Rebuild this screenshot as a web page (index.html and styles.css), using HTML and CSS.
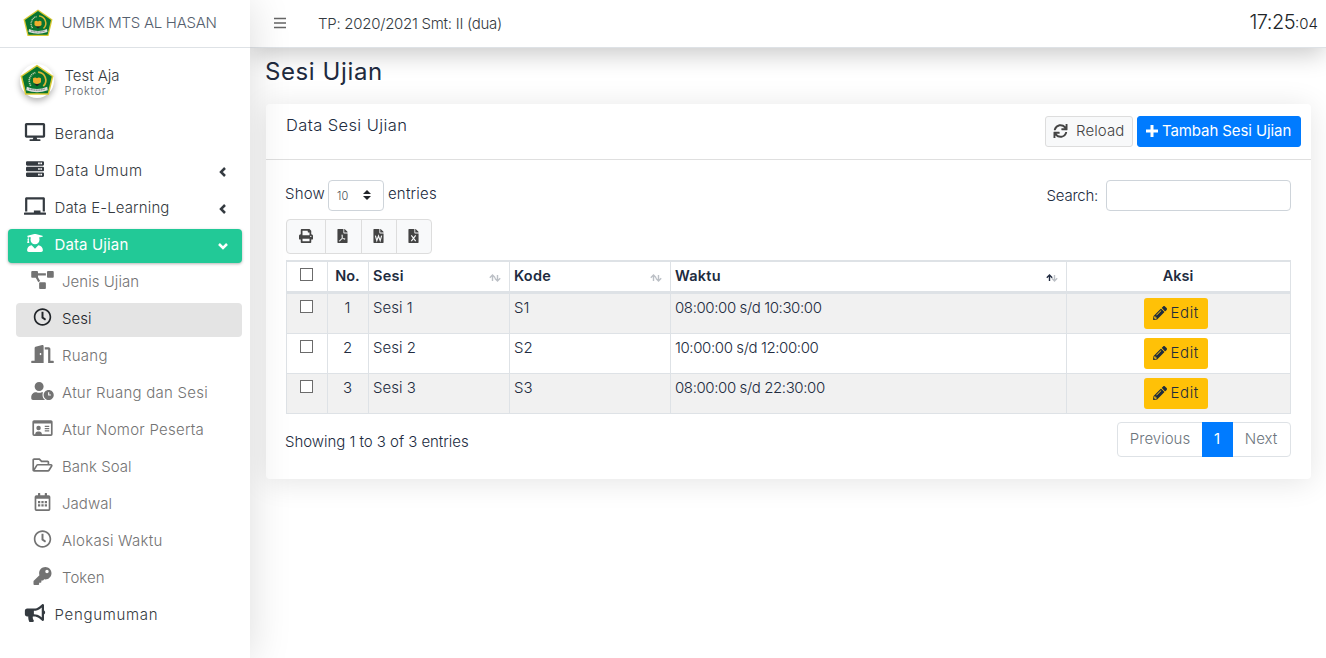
FILE: index.html
```html
<!DOCTYPE html>
<html lang="id">
<head>
<meta charset="utf-8">
<title>Sesi Ujian</title>
<link rel="stylesheet" href="styles.css">
</head>
<body>
<svg class="defs" aria-hidden="true">
  <symbol id="logo" viewBox="0 0 60 56">
    <path d="M30 1 59 21 51 54H9L1 21z" fill="#d9c934"/>
    <path d="M30 4 56 22 49 51.500H11L4 22z" fill="#08742f"/>
    <path d="M19 38a15 15 0 0 1 8-23" fill="none" stroke="#c3cfae" stroke-width="3" stroke-dasharray="2 1.300"/>
    <path d="M32 14a14.500 14.500 0 0 1 9 25" fill="none" stroke="#d8b637" stroke-width="3"/>
    <path d="M23 25q4-3 7 0 3-3 7 0v7q-3 3-7 3t-7-3z" fill="#efae2d"/>
    <path d="M25 35h10l-5 4z" fill="#222"/>
    <path d="M12 40q18 8 36 0l1 6q-19 7-38 0z" fill="#d9dedb"/>
    <path d="M16 44q14 4 28 0" fill="none" stroke="#55605a" stroke-width="1.500" stroke-dasharray="2 1"/>
  </symbol>
  <symbol id="clock" viewBox="0 0 512 512"><path d="M256 8C119 8 8 119 8 256s111 248 248 248 248-111 248-248S393 8 256 8zm0 448c-110.500 0-200-89.500-200-200S145.500 56 256 56s200 89.500 200 200-89.500 200-200 200zm61.800-104.400l-84.900-61.700c-3.100-2.300-4.900-5.900-4.900-9.700V116c0-6.600 5.400-12 12-12h32c6.600 0 12 5.400 12 12v141.700l66.800 48.600c5.400 3.900 6.500 11.400 2.600 16.800L334.600 349c-3.900 5.300-11.400 6.500-16.800 2.600z"/></symbol>
  <symbol id="file" viewBox="0 0 384 512"><path d="M224 136V0H24C10.700 0 0 10.700 0 24v464c0 13.300 10.700 24 24 24h336c13.300 0 24-10.700 24-24V160H248c-13.200 0-24-10.800-24-24zM384 121.900c0-6.300-2.500-12.400-7-16.900L279.100 7c-4.500-4.500-10.600-7-17-7H256v128h128z"/></symbol>
  <symbol id="pencil" viewBox="0 0 512 512"><path d="M497.900 142.100l-46.100 46.100c-4.700 4.700-12.300 4.700-17 0l-111-111c-4.700-4.700-4.700-12.300 0-17l46.100-46.100c18.700-18.700 49.100-18.700 67.900 0l60.100 60.100c18.800 18.700 18.800 49.100 0 67.900zM284.200 99.800L21.600 362.400.4 483.900c-2.900 16.400 11.400 30.600 27.800 27.800l121.500-21.300 262.600-262.600c4.700-4.700 4.700-12.300 0-17l-111-111c-4.800-4.700-12.400-4.700-17.100 0zM124.100 339.900c-5.500-5.500-5.500-14.300 0-19.800l154-154c5.500-5.500 14.300-5.500 19.800 0s5.500 14.300 0 19.800l-154 154c-5.500 5.500-14.300 5.500-19.800 0zM88 424h48v36.300l-64.500 11.300-31.100-31.100L51.700 376H88v48z"/></symbol>
  <symbol id="sort" viewBox="0 0 12 8"><path class="sort-up" d="M3.500 7V1M.8 3.700 3.500 1 6.200 3.700"/><path class="sort-down" d="M8.500 1V7M5.800 4.300 8.500 7 11.200 4.300"/></symbol>
</svg>

<div class="app">
  <aside class="sidebar">
    <a class="brand"><svg class="brand-logo"><use href="#logo"/></svg><span>UMBK MTS AL HASAN</span></a>
    <div class="user">
      <span class="avatar"><svg><use href="#logo"/></svg></span>
      <div><div class="user-name">Test Aja</div><div class="user-role">Proktor</div></div>
    </div>
    <nav class="menu">
      <a class="item"><svg class="icon" viewBox="0 0 576 512"><path d="M528 0H48C21.500 0 0 21.500 0 48v320c0 26.500 21.500 48 48 48h192l-16 48h-72c-13.300 0-24 10.700-24 24s10.700 24 24 24h272c13.300 0 24-10.700 24-24s-10.700-24-24-24h-72l-16-48h192c26.500 0 48-21.500 48-48V48c0-26.500-21.500-48-48-48zm-16 352H64V64h448v288z"/></svg><span class="wide-s">Beranda</span></a>
      <a class="item"><svg class="icon" viewBox="0 0 512 512"><path fill-rule="evenodd" d="M32 32h448q32 0 32 32v64q0 32-32 32H32q-32 0-32-32V64q0-32 32-32zm312 40v48h48V72zm64 0v48h48V72zM32 192h448q32 0 32 32v64q0 32-32 32H32q-32 0-32-32v-64q0-32 32-32zm312 40v48h48v-48zm64 0v48h48v-48zM32 352h448q32 0 32 32v64q0 32-32 32H32q-32 0-32-32v-64q0-32 32-32zm312 40v48h48v-48zm64 0v48h48v-48z"/></svg><span class="wide-l">Data Umum</span><svg class="caret" viewBox="0 0 10 10"><path d="M7 1 3 5l4 4"/></svg></a>
      <a class="item"><svg class="icon" viewBox="0 0 640 512"><path d="M96 64h448v352h64V40c0-22.060-17.940-40-40-40H72C49.940 0 32 17.940 32 40v376h64V64zm528 384H480v-64H288v64H16c-8.840 0-16 7.160-16 16v32c0 8.840 7.160 16 16 16h608c8.840 0 16-7.160 16-16v-32c0-8.840-7.160-16-16-16z"/></svg><span class="wide-xs">Data E-Learning</span><svg class="caret" viewBox="0 0 10 10"><path d="M7 1 3 5l4 4"/></svg></a>
      <a class="item active"><svg class="icon" viewBox="0 0 448 512"><path d="M319.400 320.600L224 416l-95.400-95.400C57.100 323.700 0 382.200 0 454.400v9.600c0 26.500 21.500 48 48 48h352c26.500 0 48-21.500 48-48v-9.600c0-72.200-57.100-130.700-128.600-133.800zM13.600 79.800l6.400 1.500v58.400c-7 4.200-12 11.500-12 20.300 0 8.400 4.600 15.400 11.100 19.700L3.500 242c-1.700 6.900 2.100 14 7.600 14h41.800c5.500 0 9.300-7.100 7.600-14l-15.600-62.300C51.400 175.400 56 168.400 56 160c0-8.800-5-16.100-12-20.300V87.100l66 15.900c-8.600 17.200-14 36.400-14 57 0 70.700 57.300 128 128 128s128-57.300 128-128c0-20.600-5.300-39.800-14-57l96.300-23.200c18.200-4.400 18.200-27.100 0-31.500l-190.400-46c-13-3.100-26.700-3.100-39.700 0L13.600 48.200c-18.100 4.400-18.100 27.200 0 31.600z"/></svg><span class="wide-xs">Data Ujian</span><svg class="caret" viewBox="0 0 10 10"><path d="M1 3l4 4 4-4"/></svg></a>
      <a class="item sub"><svg class="icon" viewBox="0 0 640 512"><path d="M384 320H256c-17.670 0-32 14.330-32 32v128c0 17.670 14.330 32 32 32h128c17.670 0 32-14.330 32-32V352c0-17.670-14.330-32-32-32zM192 32c0-17.670-14.330-32-32-32H32C14.330 0 0 14.330 0 32v128c0 17.670 14.330 32 32 32h95.720l73.160 128.040C211.980 300.980 232.400 288 256 288h.28L192 175.510V128h224V64H192V32zM608 0H480c-17.670 0-32 14.330-32 32v128c0 17.670 14.330 32 32 32h128c17.670 0 32-14.330 32-32V32c0-17.670-14.330-32-32-32z"/></svg><span>Jenis Ujian</span></a>
      <a class="item sub current"><svg class="icon"><use href="#clock"/></svg><span>Sesi</span></a>
      <a class="item sub"><svg class="icon" viewBox="0 0 640 512"><path d="M624 448h-80V113.450C544 86.190 522.470 64 496 64H384v64h96v384h144c8.840 0 16-7.160 16-16v-32c0-8.840-7.160-16-16-16zM312.240 1.010l-192 49.740C105.990 54.440 96 67.700 96 82.920V448H16c-8.840 0-16 7.160-16 16v32c0 8.840 7.160 16 16 16h336V33.180c0-21.580-19.560-37.410-39.760-32.170zM264 288c-13.250 0-24-14.330-24-32s10.750-32 24-32 24 14.330 24 32-10.750 32-24 32z"/></svg><span class="wide-s">Ruang</span></a>
      <a class="item sub"><svg class="icon" viewBox="0 0 640 512"><path d="M496 224c-79.600 0-144 64.400-144 144s64.400 144 144 144 144-64.400 144-144-64.400-144-144-144zm64 150.300c0 5.300-4.400 9.700-9.700 9.700h-60.600c-5.300 0-9.700-4.400-9.700-9.700v-76.600c0-5.300 4.400-9.700 9.700-9.700h12.600c5.300 0 9.700 4.400 9.700 9.700V352h38.300c5.300 0 9.700 4.400 9.700 9.700v12.600zM320 368c0-27.800 6.700-54.100 18.200-77.500-8-1.500-16.200-2.500-24.600-2.500h-16.700c-22.200 10.200-46.900 16-72.900 16s-50.600-5.800-72.900-16h-16.700C60.200 288 0 348.200 0 422.400V464c0 26.500 21.500 48 48 48h347.100c-45.300-31.900-75.100-84.500-75.100-144zm-96-112c70.700 0 128-57.300 128-128S294.700 0 224 0 96 57.300 96 128s57.300 128 128 128z"/></svg><span class="wide-s">Atur Ruang dan Sesi</span></a>
      <a class="item sub"><svg class="icon" viewBox="0 0 576 512"><path fill-rule="evenodd" d="M48 32h480q48 0 48 48v352q0 48-48 48H48q-48 0-48-48V80q0-48 48-48zm0 96v304h32c0-50 30-80 76-80h40c46 0 76 30 76 80h256V128zm128 64a64 64 0 1 1 0 128 64 64 0 0 1 0-128zm176 0h128v32H352zm0 64h128v32H352zm0 64h128v32H352z"/></svg><span class="wide-s">Atur Nomor Peserta</span></a>
      <a class="item sub"><svg class="icon" viewBox="0 0 576 512"><path d="M527.900 224H480v-48c0-26.500-21.500-48-48-48H272l-64-64H48C21.500 64 0 85.500 0 112v288c0 26.500 21.500 48 48 48h400c16.500 0 31.900-8.500 40.700-22.600l79.900-128c20-31.900-3-73.400-40.700-73.400zM48 118c0-3.300 2.700-6 6-6h134.100l64 64H426c3.300 0 6 2.700 6 6v42H152c-16.800 0-32.400 8.800-41.100 23.200L48 351.400zm400 282H72l77.200-128H528z"/></svg><span>Bank Soal</span></a>
      <a class="item sub"><svg class="icon" viewBox="0 0 448 512"><path fill-rule="evenodd" d="M96 64V12q0-12 12-12h40q12 0 12 12v52h128V12q0-12 12-12h40q12 0 12 12v52h48q48 0 48 48v352q0 48-48 48H48q-48 0-48-48V112q0-48 48-48zM48 160v304h352V160zm48 64h64v64H96zm96 0h64v64h-64zm96 0h64v64h-64zM96 320h64v64H96zm96 0h64v64h-64zm96 0h64v64h-64z"/></svg><span>Jadwal</span></a>
      <a class="item sub"><svg class="icon"><use href="#clock"/></svg><span class="wide-s">Alokasi Waktu</span></a>
      <a class="item sub"><svg class="icon" viewBox="0 0 512 512"><path d="M512 176.001C512 273.203 433.202 352 336 352c-11.220 0-22.190-1.062-32.827-3.069l-24.012 27.014A23.999 23.999 0 0 1 261.223 384H224v40c0 13.255-10.745 24-24 24h-40v40c0 13.255-10.745 24-24 24H24c-13.255 0-24-10.745-24-24v-78.059c0-6.365 2.529-12.470 7.029-16.971l161.802-161.802C163.108 213.814 160 195.271 160 176 160 78.798 238.797.001 335.999 0 433.488-.001 512 78.511 512 176.001zM336 128c0 26.510 21.490 48 48 48s48-21.490 48-48-21.490-48-48-48-48 21.490-48 48z"/></svg><span>Token</span></a>
      <a class="item"><svg class="icon" viewBox="0 0 576 512"><path d="M576 240c0-23.630-12.950-44.040-32-55.120V32.010C544 23.260 537.020 0 512 0c-7.120 0-14.190 2.380-19.980 7.020l-85.030 68.030C364.280 109.190 310.660 128 256 128H64c-35.350 0-64 28.650-64 64v96c0 35.350 28.650 64 64 64h33.700c-1.390 10.480-2.180 21.140-2.180 32 0 39.770 9.260 77.350 25.560 110.940 5.190 10.690 16.520 17.060 28.400 17.060h74.280c26.050 0 41.690-29.840 25.900-50.560-16.400-21.520-26.150-48.360-26.150-77.440 0-11.110 1.620-21.790 4.410-32H256c54.660 0 108.280 18.810 150.980 52.950l85.030 68.030a32.023 32.023 0 0 0 19.980 7.020c24.920 0 32-22.780 32-32V295.130C563.050 284.040 576 263.630 576 240zm-96 141.420l-33.050-26.440C392.950 311.780 325.120 288 256 288v-96c69.120 0 136.950-23.780 190.950-66.980L480 98.580v282.840z"/></svg><span class="wide-l">Pengumuman</span></a>
    </nav>
  </aside>

  <div class="page">
    <header class="topbar">
      <svg class="burger" viewBox="0 0 12 12"><path d="M0 1.500h12M0 6h12M0 10.500h12"/></svg>
      <span class="period">TP: 2020/2021 Smt: II (dua)</span>
      <span class="clock"><span class="clock-main">17:25</span><span class="clock-sec">:04</span></span>
    </header>
    <main class="content">
      <h1>Sesi Ujian</h1>
      <section class="card">
        <div class="card-head">
          <h2>Data Sesi Ujian</h2>
          <div class="actions">
            <button class="btn btn-light"><svg viewBox="0 0 512 512"><path d="M440.650 12.570l4 82.770A247.160 247.160 0 0 0 255.830 8C134.730 8 33.910 94.920 12.290 209.820A12 12 0 0 0 24.090 224h49.050a12 12 0 0 0 11.670-9.260 175.910 175.910 0 0 1 317-56.940l-101.460-4.860a12 12 0 0 0-12.570 12v47.410a12 12 0 0 0 12 12H500a12 12 0 0 0 12-12V12a12 12 0 0 0-12-12h-47.370a12 12 0 0 0-11.980 12.570zM255.830 432a175.610 175.610 0 0 1-146-77.800l101.800 4.870a12 12 0 0 0 12.570-12v-47.400a12 12 0 0 0-12-12H12a12 12 0 0 0-12 12V500a12 12 0 0 0 12 12h47.350a12 12 0 0 0 12-12.600l-4.150-82.570A247.170 247.170 0 0 0 255.830 504c121.110 0 221.930-86.920 243.550-201.820a12 12 0 0 0-11.800-14.180h-49.050a12 12 0 0 0-11.670 9.260A175.860 175.860 0 0 1 255.830 432z"/></svg><span>Reload</span></button>
            <button class="btn btn-primary"><svg viewBox="0 0 14 14"><path d="M5.500 1h3v4.500H13v3H8.500V13h-3V8.500H1v-3h4.500z"/></svg><span>Tambah Sesi Ujian</span></button>
          </div>
        </div>
        <div class="card-body">
          <div class="controls">
            <label class="length"><span>Show</span><span class="select"><span>10</span><svg viewBox="0 0 8 10"><path d="M0 4 4 0l4 4zM0 6h8l-4 4z"/></svg></span><span>entries</span></label>
            <label class="search"><span>Search:</span><input type="text"></label>
          </div>
          <div class="exports">
            <button class="export print"><svg viewBox="0 0 512 512"><path d="M448 192V77.250c0-8.490-3.370-16.620-9.370-22.630L393.370 9.370c-6-6-14.140-9.370-22.630-9.370H96C78.330 0 64 14.330 64 32v160c-35.350 0-64 28.650-64 64v112c0 8.840 7.160 16 16 16h48v96c0 17.670 14.330 32 32 32h320c17.670 0 32-14.330 32-32v-96h48c8.840 0 16-7.160 16-16V256c0-35.350-28.650-64-64-64zm-64 256H128v-96h256v96zm0-224H128V64h192v48c0 8.840 7.160 16 16 16h48v96zm48 72c-13.250 0-24-10.750-24-24 0-13.260 10.750-24 24-24s24 10.740 24 24c0 13.250-10.750 24-24 24z"/></svg></button>
            <button class="export"><svg viewBox="0 0 384 512"><use href="#file"/><path class="mark thin" d="M178 210c-10 0-12 40 0 76s40 88 80 92c40 2 50-22 10-28-50-8-110 10-150 36s-50 58-30 60c26 0 80-90 98-150 8-40 6-86-8-86z"/></svg></button>
            <button class="export"><svg viewBox="0 0 384 512"><use href="#file"/><path class="mark" d="M78 240l52 184 62-170 62 170 52-184"/></svg></button>
            <button class="export"><svg viewBox="0 0 384 512"><use href="#file"/><path class="mark" d="M112 236l160 208M272 236 112 444"/></svg></button>
          </div>
          <table>
            <colgroup><col class="c-check"><col class="c-no"><col class="c-sesi"><col class="c-kode"><col class="c-waktu"><col class="c-aksi"></colgroup>
            <thead><tr>
              <th class="mid"><input type="checkbox"></th><th class="mid">No.</th>
              <th><div class="th">Sesi<svg><use href="#sort"/></svg></div></th>
              <th><div class="th">Kode<svg><use href="#sort"/></svg></div></th>
              <th><div class="th asc">Waktu<svg><use href="#sort"/></svg></div></th>
              <th class="mid">Aksi</th>
            </tr></thead>
            <tbody>
              <tr><td class="mid"><input type="checkbox"></td><td class="mid">1</td><td>Sesi 1</td><td>S1</td><td class="time">08:00:00 s/d 10:30:00</td><td class="mid"><button class="edit"><svg><use href="#pencil"/></svg>Edit</button></td></tr>
              <tr><td class="mid"><input type="checkbox"></td><td class="mid">2</td><td>Sesi 2</td><td>S2</td><td class="time">10:00:00 s/d 12:00:00</td><td class="mid"><button class="edit"><svg><use href="#pencil"/></svg>Edit</button></td></tr>
              <tr><td class="mid"><input type="checkbox"></td><td class="mid">3</td><td>Sesi 3</td><td>S3</td><td class="time">08:00:00 s/d 22:30:00</td><td class="mid"><button class="edit"><svg><use href="#pencil"/></svg>Edit</button></td></tr>
            </tbody>
          </table>
          <div class="footer">
            <span class="info">Showing 1 to 3 of 3 entries</span>
            <div class="pager"><a class="prev">Previous</a><a class="on">1</a><a class="next">Next</a></div>
          </div>
        </div>
      </section>
    </main>
  </div>
</div>
</body>
</html>
```
FILE: styles.css
```css
* { box-sizing: border-box; }
body { margin: 0; background: #fff; color: #212b40; font: 270 15px/22px Inter, "Open Sans", sans-serif; overflow: hidden; }
button, input { font: inherit; color: inherit; margin: 0; }
svg { fill: currentColor; display: block; flex: none; }
.defs { position: absolute; width: 0; height: 0; }
.app { display: flex; height: 658px; }

.sidebar { width: 250px; flex: none; background: #fff; color: #343a40; position: relative; z-index: 2; box-shadow: 0 3px 40px rgba(0, 0, 0, .14); }
.brand { display: flex; align-items: center; height: 48px; border-bottom: 1px solid #dee2e6; padding: 0 0 1px 23px; gap: 8.500px; color: #55606e; }
.brand-logo { width: 30px; height: 28px; }
.brand span { letter-spacing: -.28px; padding-bottom: 1px; }
.user { display: flex; height: 70px; padding: 16px 0 0 20px; gap: 10.500px; }
.avatar { width: 34px; height: 34px; border-radius: 50%; box-shadow: 0 3px 6px rgba(0, 0, 0, .3); }
.avatar svg { width: 34px; height: 32px; }
.user-name { line-height: 20px; padding-top: 2px; letter-spacing: -.05px; }
.user-role { font-size: 11px; line-height: 11px; letter-spacing: .75px; color: #5d6369; }
.menu { display: flex; flex-direction: column; gap: 3px; padding: 0 8px; }
.item { display: flex; align-items: center; height: 34px; padding: 0 14px 0 15.500px; border-radius: 4px; }
.item .icon { width: 22px; height: 18px; margin: 0 9px 6px 0; }
.item span { padding-bottom: 3px; letter-spacing: .05px; }
.item .wide-xs { letter-spacing: .13px; }
.item .wide-s { letter-spacing: .25px; }
.item .wide-l { letter-spacing: .7px; }
.item.sub { margin-left: 8px; color: #737373; padding-left: 15px; }
.item.sub .icon { width: 23px; margin-right: 8px; }
.item.active { background: #22c997; color: #fff; font-weight: 400; box-shadow: 0 1px 3px rgba(0, 0, 0, .3); }
.item.current { background: #e4e4e4; color: #212529; }
.caret { width: 10px; height: 10px; margin-left: auto; fill: none; stroke: currentColor; stroke-width: 2.5; }

.page { flex: 1; min-width: 0; }
.topbar { height: 48px; display: flex; align-items: center; padding: 0 8px 1px 24px; border-bottom: 1px solid #dee2e6; background: #fff; position: relative; z-index: 1; color: #343a40; box-shadow: 0 8px 24px -2px rgba(0, 0, 0, .22); }
.burger { width: 12px; height: 12px; stroke: #666; stroke-width: 1.5; margin-right: 32px; }
.period { letter-spacing: -.27px; padding-top: 2px; }
.clock { margin-left: auto; display: flex; align-items: baseline; color: #212529; }
.clock-main { font-size: 20px; letter-spacing: -.5px; }
.clock-sec { font-size: 15px; }
.content { padding: 8px 15px 0 16px; }
h1 { margin: 0 0 0 -1px; font-size: 24px; line-height: 32px; font-weight: 400; letter-spacing: .6px; }
.card { margin-top: 16px; height: 375px; border-radius: 4px; background: #fff; box-shadow: 0 3px 30px rgba(0, 0, 0, .11); }
.card-head { height: 56px; border-bottom: 1px solid #dfdfdf; display: flex; justify-content: space-between; padding: 12px 10px 0 20px; }
h2 { margin: -2px 0 0; font-size: 16.500px; line-height: 22px; font-weight: 270; letter-spacing: .4px; }
.actions { display: flex; gap: 4px; }
.btn { height: 31px; display: flex; align-items: center; border: 1px solid #ddd; border-radius: 3px; padding: 0 8px 2px; white-space: nowrap; }
.btn-light { width: 88px; background: #f8f9fa; color: #444; gap: 8px; padding-left: 7px; letter-spacing: .1px; }
.btn-light svg { width: 15px; height: 14px; }
.btn-primary { width: 164px; background: #007bff; border-color: #007bff; color: #fff; font-weight: 400; gap: 3px; padding: 0 7px 2px; letter-spacing: -.1px; }
.btn-primary svg { width: 14px; height: 14px; }
.card-body { padding: 20px 20px 0; }
.controls { display: flex; justify-content: space-between; height: 31px; margin-left: -1px; }
.length, .search { display: flex; align-items: center; }
.length > span { padding-bottom: 3px; letter-spacing: .2px; }
.length .select { display: flex; align-items: center; width: 56px; height: 31px; border: 1px solid #ced4da; border-radius: 4px; margin: 0 4px 0 3px; padding: 0 12px 0 8px; justify-content: space-between; font-size: 11px; color: #495057; }
.select svg { width: 8px; height: 10px; color: #212529; margin-top: -1px; }
.search span { letter-spacing: -.25px; }
.search input { width: 185px; height: 31px; border: 1px solid #ced4da; border-radius: 4px; margin-left: 8px; }
.exports { display: flex; height: 35px; width: 146px; margin-top: 8px; border: 1px solid #ddd; border-radius: 4px; background: #f8f9fa; color: #444; }
.export { flex: 0 0 35.500px; height: 33px; border: 0; border-left: 1px solid #ddd; background: none; padding: 0 1px 1px 0; display: grid; place-items: center; }
.export.print { flex-basis: 38px; border-left: 0; }
.export svg { width: 11px; height: 14px; }
.export.print svg { width: 14px; }
.mark { fill: none; stroke: #f8f9fa; stroke-width: 42; }
.mark.thin { stroke-width: 27; }

table { width: 1005px; margin-top: 6px; table-layout: fixed; border-spacing: 0; }
.c-check, .c-no { width: 41px; }
.c-sesi { width: 141px; }
.c-kode { width: 161px; }
.c-waktu { width: 396px; }
.c-aksi { width: 225px; }
th, td { border-left: 1px solid #dee2e6; padding: 4px 4px 0; vertical-align: top; text-align: left; }
th:last-child, td:last-child { border-right: 1px solid #dee2e6; }
th { height: 34px; border-top: 2px solid #dee2e6; border-bottom: 3px solid #dee2e6; font-weight: 600; padding-top: 3px; font-size: 14.500px; }
td { height: 40px; border-bottom: 1px solid #dee2e6; padding-top: 3px; }
tbody tr:nth-child(odd) { background: #f1f1f1; }
th.mid, td.mid { text-align: center; padding-right: 5px; }
td.mid:first-child { line-height: 15px; padding: 6px 5px 0 3px; }
th.mid:first-child { line-height: 15px; padding: 6px 5px 0 3px; }
td.mid:last-child { padding-right: 10px; }
.time { letter-spacing: -.4px; }
input[type="checkbox"] { appearance: none; display: inline-block; width: 13px; height: 13px; border: 1px solid #6b6b6b; background: #fff; vertical-align: top; }
.th { display: flex; justify-content: space-between; align-items: center; padding-right: 4px; letter-spacing: .25px; }
.th svg { width: 12px; height: 8px; margin-top: 4px; }
.sort-up, .sort-down { fill: none; stroke: #bcc0c6; stroke-width: 1.4; }
.asc { --up: #212b40; }
.sort-up { stroke: var(--up, #bcc0c6); }
.edit { display: inline-flex; align-items: center; width: 64px; height: 31px; border: 0; border-radius: 3px; background: #ffc107; color: #1f2d3d; padding: 0 7px 1px 9px; gap: 4px; margin-top: 1px; letter-spacing: .6px; }
.edit svg { width: 14px; height: 14px; }
.footer { display: flex; justify-content: space-between; margin-top: 8px; }
.info { padding-top: 9px; margin-left: -1px; letter-spacing: -.04px; }
.pager { display: flex; height: 35px; width: 174px; border: 1px solid #dee2e6; border-radius: 4px; color: #6c757d; line-height: 31px; text-align: center; }
.pager .prev { width: 84px; }
.pager .on { width: 31px; margin: -1px 0; background: #007bff; color: #fff; font-weight: 400; line-height: 33px; padding-right: 1px; }
.pager .next { flex: 1; padding-right: 1px; }
```
